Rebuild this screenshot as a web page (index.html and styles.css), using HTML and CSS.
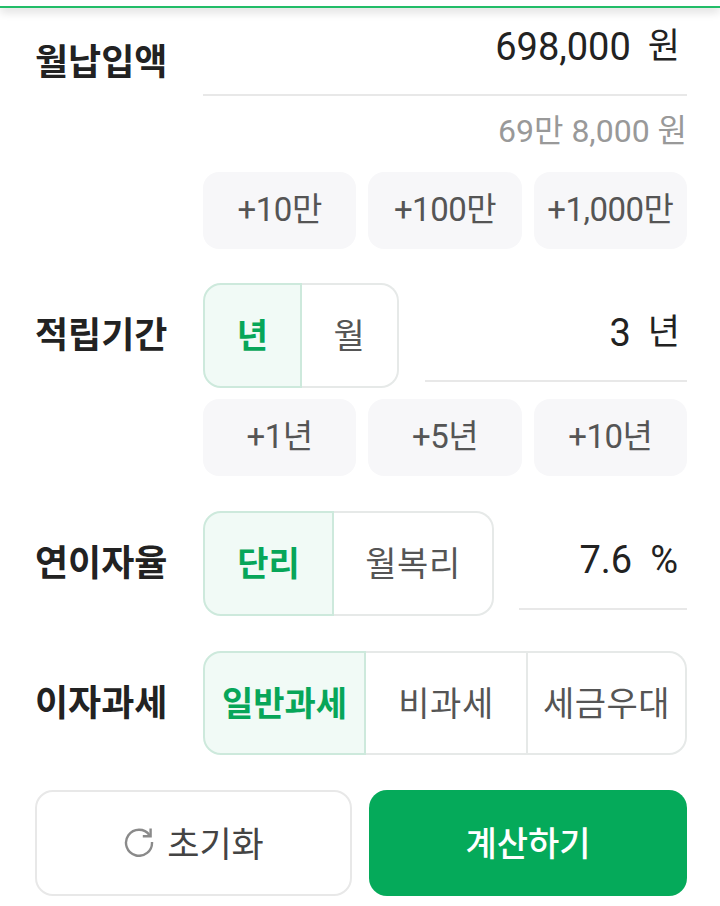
FILE: index.html
```html
<!DOCTYPE html>
<html lang="ko">
  <head>
    <meta charset="UTF-8" />
    <meta name="viewport" content="width=device-width, initial-scale=1.0" />
    <title>적금 계산기</title>
    <link rel="stylesheet" href="styles.css">
  </head>
  <body>
    <div class="top-bar"></div>

    <div class="form">
      <!-- 월납입액 -->
      <div class="row row-amount">
        <div class="label label-amount">월납입액</div>
        <div class="field">
          <div class="input input-amount"><span>698,000</span><span class="unit">원</span></div>
          <div class="helper">69만 8,000 원</div>
          <div class="chips">
            <div class="chip">+10만</div>
            <div class="chip">+100만</div>
            <div class="chip">+1,000만</div>
          </div>
        </div>
      </div>

      <!-- 적립기간 -->
      <div class="row row-period">
        <div class="label label-toggle">적립기간</div>
        <div class="field">
          <div class="line">
            <div class="toggle toggle-period">
              <div class="opt active opt-year">년</div>
              <div class="opt">월</div>
            </div>
            <div class="input input-period"><span>3</span><span class="unit">년</span></div>
          </div>
          <div class="chips chips-period">
            <div class="chip">+1년</div>
            <div class="chip">+5년</div>
            <div class="chip">+10년</div>
          </div>
        </div>
      </div>

      <!-- 연이자율 -->
      <div class="row row-rate">
        <div class="label label-toggle">연이자율</div>
        <div class="field">
          <div class="line">
            <div class="toggle toggle-rate">
              <div class="opt active opt-simple">단리</div>
              <div class="opt">월복리</div>
            </div>
            <div class="input input-rate"><span>7.6</span><span>%</span></div>
          </div>
        </div>
      </div>

      <!-- 이자과세 -->
      <div class="row row-tax">
        <div class="label label-toggle">이자과세</div>
        <div class="field">
          <div class="toggle toggle-tax">
            <div class="opt active opt-general">일반과세</div>
            <div class="opt opt-free">비과세</div>
            <div class="opt">세금우대</div>
          </div>
        </div>
      </div>

      <div class="actions">
        <div class="btn btn-reset">
          <svg class="reset-icon" width="32" height="32" viewBox="0 0 32 32" fill="none" stroke="#8a8a8a" stroke-width="2.4">
            <path d="M26.6 10.2A13 13 0 1 0 29 17" />
            <path d="M27.6 3.4v7.8h-7.8" />
          </svg>
          <span>초기화</span>
        </div>
        <div class="btn btn-calc">계산하기</div>
      </div>
    </div>
  </body>
</html>
```

FILE: styles.css
```css
* {
  box-sizing: border-box;
}
body {
  margin: 0;
  padding: 0;
  height: 906px;
  overflow: hidden;
  background: #fff;
  color: #222;
  font-family: Roboto, "Noto Sans CJK KR", sans-serif;
}
.top-bar {
  height: 8px;
  background: #fff;
  border-bottom: 2px solid #22bd68;
  box-shadow: 0 4px 10px rgba(0, 0, 0, 0.14);
}
.form {
  padding: 0 33px 0 35px;
}
.row {
  display: flex;
}
.label {
  width: 168px;
  flex-shrink: 0;
  font-size: 36px;
  font-weight: 700;
  letter-spacing: 0;
  line-height: 52px;
  color: #222;
}
.label-amount {
  margin-top: 29px;
}
.label-toggle {
  padding-top: 27px;
}
.field {
  flex: 1;
  min-width: 0;
}
.line {
  display: flex;
  align-items: flex-start;
}

/* inputs */
.input {
  display: flex;
  justify-content: flex-end;
  gap: 18px;
  padding-right: 9px;
  font-size: 38px;
  line-height: 50px;
  color: #222;
  border-bottom: 2px solid #e8e8e8;
}
.unit {
  font-size: 35px;
  margin-left: -1px;
  margin-right: -2px;
}
.input-amount {
  height: 88px;
  padding-top: 14px;
}
.input-period {
  flex: 1;
  margin-left: 26px;
  height: 99px;
  padding-top: 25px;
}
.input-rate {
  flex: 1;
  margin-left: 25px;
  height: 99px;
  padding-top: 24px;
}
.helper {
  margin-top: 13px;
  text-align: right;
  font-size: 32px;
  line-height: 44px;
  color: #999;
}

/* quick add chips */
.chips {
  display: flex;
  gap: 12px;
  margin-top: 19px;
}
.chips-period {
  margin-top: 11px;
}
.chip {
  flex: 1;
  height: 77px;
  padding-bottom: 8px;
  display: flex;
  align-items: center;
  justify-content: center;
  background: #f7f7f9;
  border-radius: 16px;
  font-size: 33px;
  letter-spacing: -0.5px;
  color: #555;
}

/* segmented toggle */
.toggle {
  display: flex;
  height: 105px;
  flex-shrink: 0;
}
.toggle-period {
  width: 196px;
}
.toggle-rate {
  width: 291px;
}
.toggle-tax {
  width: 484px;
  height: 104px;
}
.opt {
  flex: 1;
  padding-bottom: 4px;
  display: flex;
  align-items: center;
  justify-content: center;
  font-size: 34px;
  font-weight: 400;
  letter-spacing: 0.5px;
  color: #555;
  border: 2px solid #e6e9e8;
  border-left: none;
}
.opt:first-child {
  border-left: 2px solid #e6e9e8;
  border-radius: 18px 0 0 18px;
}
.opt:last-child {
  border-radius: 0 18px 18px 0;
}
.opt.active {
  background: #f1faf6;
  color: #07a659;
  font-weight: 700;
  letter-spacing: 0;
  border-color: #cde9dc;
}
.opt-year {
  flex: none;
  width: 99px;
}
.opt-simple {
  flex: none;
  width: 131px;
}
.opt-general {
  flex: none;
  width: 163px;
}
.opt-free {
  flex: none;
  width: 162px;
}
.row-period {
  margin-top: 34px;
}
.row-rate {
  margin-top: 35px;
}
.row-tax {
  margin-top: 35px;
}

/* bottom buttons */
.actions {
  display: flex;
  justify-content: space-between;
  margin-top: 35px;
}
.btn {
  width: 318px;
  height: 106px;
  padding-bottom: 4px;
  display: flex;
  align-items: center;
  justify-content: center;
  border-radius: 18px;
  font-size: 35px;
}
.btn-reset {
  width: 317px;
  gap: 12px;
  background: #fff;
  border: 2px solid #e8e8e8;
  color: #444;
}
.btn-calc {
  background: #05aa5a;
  color: #fff;
  font-size: 34px;
  font-weight: 500;
}
```
